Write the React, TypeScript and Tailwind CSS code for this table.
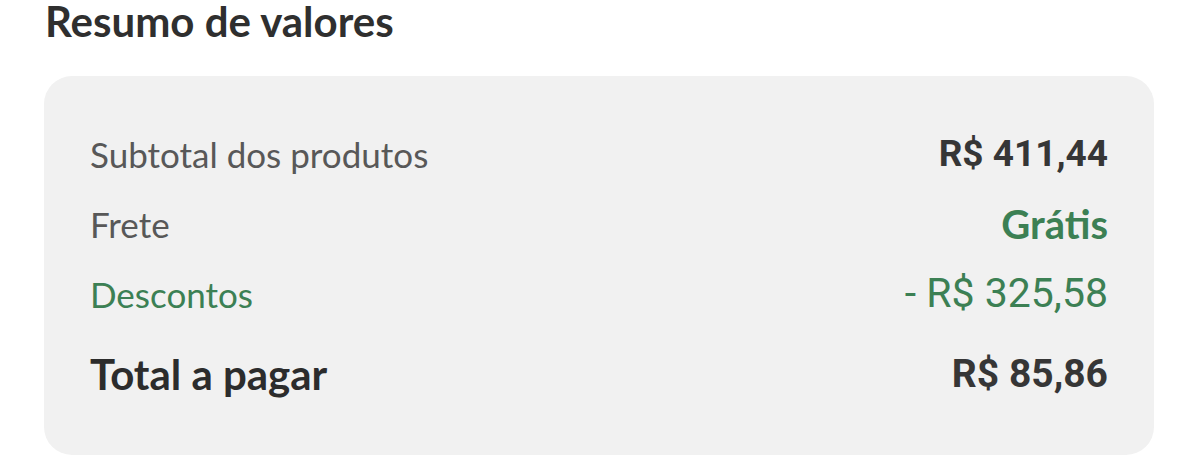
export default function App() {
  return (
    <div className="w-[1199px] h-[475px] bg-white overflow-hidden font-['Lato','Noto_Sans',sans-serif]">
      <div className="pl-[45px] h-[76px]">
        <h1 className="text-[42px] leading-[42px] font-bold text-[#2f2f2f]">Resumo de valores</h1>
      </div>
      <div className="ml-[44px] w-[1110px] h-[379px] rounded-[28px] bg-[#f1f1f1] px-[46px] pt-[43px]">
        <div className="flex flex-col">
          <div className="flex justify-between items-center h-[70px]">
            <span className="text-[35px] text-[#585858]">Subtotal dos produtos</span>
            <span className="text-[37px] font-bold text-[#363636] font-['Roboto',sans-serif]">R$ 411,44</span>
          </div>
          <div className="flex justify-between items-center h-[70px]">
            <span className="text-[35px] text-[#585858]">Frete</span>
            <span className="text-[40px] font-bold text-[#3c8054]">Grátis</span>
          </div>
          <div className="flex justify-between items-center h-[70px]">
            <span className="text-[35px] text-[#3c8054]">Descontos</span>
            <span className="text-[41px] text-[#3c8054] font-['Roboto',sans-serif]">- R$ 325,58</span>
          </div>
          <div className="flex justify-between items-center h-[90px]">
            <span className="text-[42px] font-bold text-[#2c2c2c]">Total a pagar</span>
            <span className="text-[39px] font-bold text-[#363636] font-['Roboto',sans-serif]">R$ 85,86</span>
          </div>
        </div>
      </div>
    </div>
  );
}
